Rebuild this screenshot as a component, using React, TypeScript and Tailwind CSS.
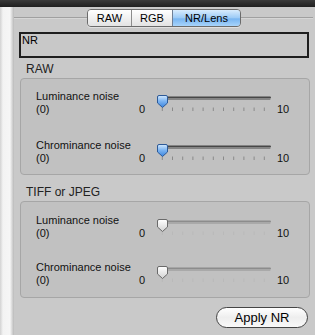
import React from "react";

const TICKS = [6.3, 16.5, 26.7, 36.9, 47.1, 57.3, 67.5, 77.7, 87.9, 98.1, 108.3];

const Slider = ({ active }: { active: boolean }) => {
  const gid = active ? "thumbBlue" : "thumbGray";
  return (
    <svg width="118" height="18" viewBox="0 0 118 18" className="block">
      <defs>
        <linearGradient id="thumbBlue" x1="0" y1="0" x2="0" y2="1">
          <stop offset="0" stopColor="#d4e9fd" />
          <stop offset="0.45" stopColor="#7fb6f2" />
          <stop offset="1" stopColor="#3a84de" />
        </linearGradient>
        <linearGradient id="thumbGray" x1="0" y1="0" x2="0" y2="1">
          <stop offset="0" stopColor="#ffffff" />
          <stop offset="1" stopColor="#d2d2d2" />
        </linearGradient>
      </defs>
      <rect x="1" y="2.5" width="114" height="2" rx="1" fill={active ? "#474747" : "#8c8c8c"} />
      <rect x="1.5" y="4.5" width="113" height="1.5" rx="0.75" fill={active ? "#858585" : "#a9a9a9"} />
      {TICKS.map((x) => (
        <rect key={x} x={x - 0.5} y="13.5" width="1" height="3.5" fill={active ? "#8a8a8a" : "#b9b9b9"} />
      ))}
      <path
        d="M1.5,3 Q1.5,1.5 3,1.5 H10 Q11.5,1.5 11.5,3 V9 L6.5,13.5 L1.5,9 Z"
        fill={`url(#${gid})`}
        stroke={active ? "#2d5a98" : "#6a6a6a"}
        strokeWidth="1"
      />
    </svg>
  );
};

const Row = ({ label, active }: { label: string; active: boolean }) => (
  <div className="flex items-start h-[26px] text-[11px] leading-[13px] text-[#111]">
    <div className="w-[98px]">
      <div className="whitespace-nowrap">{label}</div>
      <div>(0)</div>
    </div>
    <div className="w-[11px] pt-[13px] text-right">0</div>
    <div className="ml-[11px] mt-[4px]">
      <Slider active={active} />
    </div>
    <div className="ml-[3px] pt-[13px]">10</div>
  </div>
);

const Group = ({ title, active, top, gap }: { title: string; active: boolean; top: number; gap: string }) => (
  <>
    <div className="ml-[12px] text-[12px] leading-[16px] text-[#222]">{title}</div>
    <div
      className={`ml-[6px] mt-[1px] w-[290px] h-[97px] border border-[#a6a6a6] rounded-[4px] bg-[#c1c1c1] pl-[15px] flex flex-col ${gap}`}
      style={{ paddingTop: top }}
    >
      <Row label="Luminance noise" active={active} />
      <Row label="Chrominance noise" active={active} />
    </div>
  </>
);

export default function App() {
  return (
    <div className="w-[315px] h-[335px] overflow-hidden flex flex-col bg-[#c9c9c9] font-['Liberation_Sans',Arial,sans-serif]">
      <div className="h-[7px] bg-gradient-to-b from-[#3a3a3a] to-[#1f1f1f]" />
      <div className="flex flex-1">
        <div className="w-[14px] bg-[linear-gradient(to_right,#d2d2d2_0px,#f3f3f3_3px,#f6f6f6_10px,#b9b9b9_14px)]" />
        <div className="flex-1 flex flex-col">
          <div className="mt-[2px] h-[18px] flex items-center mr-[2px]">
            <div className="flex-1 h-[2px] border-t border-[#a0a0a0] border-b-[#d6d6d6] border-b" />
            <div className="flex h-[18px] w-[154px] border border-[#6b6b6b] rounded-[4px] overflow-hidden text-[11px] text-black shadow-[0_1px_0_#e0e0e0]">
              <div className="w-[44px] flex items-center justify-center bg-gradient-to-b from-[#ffffff] to-[#e3e3e3] border-r border-[#8c8c8c]">RAW</div>
              <div className="w-[41px] flex items-center justify-center bg-gradient-to-b from-[#ffffff] to-[#e3e3e3] border-r border-[#6f7f95]">RGB</div>
              <div className="flex-1 flex items-center justify-center bg-[linear-gradient(to_bottom,#d9ecfd,#9bcaf6_50%,#78b5f1_55%,#a8d4fb)]">NR/Lens</div>
            </div>
            <div className="w-[72px] h-[2px] border-t border-[#a0a0a0] border-b border-b-[#d6d6d6]" />
          </div>

          <div className="ml-[5px] mt-[5px] w-[290px] h-[26px] border-2 border-[#1e1e1e] bg-[#c8c8c8] pl-[1px] text-[11px] leading-[13px] text-black">
            NR
          </div>

          <div className="mt-[3px]" />
          <Group title="RAW" active={true} top={11} gap="gap-[23px]" />
          <div className="mt-[9px]" />
          <Group title="TIFF or JPEG" active={false} top={12} gap="gap-[21px]" />

          <div className="mt-[9px] self-end mr-[7px] w-[92px] h-[21px] rounded-full border border-[#454545] bg-gradient-to-b from-[#ffffff] via-[#eeeeee] to-[#f9f9f9] flex items-center justify-center text-[13px] text-black">
            Apply NR
          </div>
        </div>
      </div>
    </div>
  );
}
